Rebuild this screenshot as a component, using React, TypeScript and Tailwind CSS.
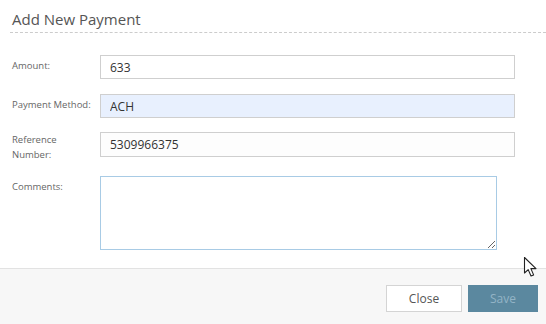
const fieldClass =
  "h-[24px] w-[415px] border border-[#cfcfcf] px-[9px] text-[12px] text-[#333] outline-none";

const Label = ({ children }: { children: React.ReactNode }) => (
  <label className="w-[88px] pt-[3px] text-[9.5px] leading-[15px] text-[#666]">{children}</label>
);

const AddPaymentDialog = () => {
  return (
    <div
      className="relative flex h-[324px] w-[546px] flex-col overflow-hidden bg-white"
      style={{ fontFamily: '"Open Sans", sans-serif' }}
    >
      <div className="ml-[10px] h-[33px] border-b border-dashed border-[#cccccc] pl-[2px] pt-[9px]">
        <h2 className="text-[15px] leading-[20px] text-[#555]">Add New Payment</h2>
      </div>

      <div className="flex flex-col pl-[12px] pt-[22px]">
        <div className="flex items-start">
          <Label>Amount:</Label>
          <input className={`${fieldClass} bg-white`} defaultValue="633" />
        </div>
        <div className="mt-[15px] flex items-start">
          <Label>Payment Method:</Label>
          <input className={`${fieldClass} bg-[#e8f0fe]`} defaultValue="ACH" />
        </div>
        <div className="mt-[14px] flex items-start">
          <label className="w-[88px] text-[9.5px] leading-[15px] text-[#666]">
            Reference
            <br />
            Number:
          </label>
          <input className={`${fieldClass} h-[25px] bg-[#fdfdfd]`} defaultValue="5309966375" />
        </div>
        <div className="mt-[14px] flex items-start">
          <Label>Comments:</Label>
          <textarea className="h-[74px] w-[397px] border border-[#a8cbe5] bg-white px-[8px] text-[12px] outline-none" />
        </div>
      </div>

      <div className="mt-auto flex h-[56px] items-start justify-end gap-[6px] border-t border-[#e2e2e2] bg-[#f7f7f7] pr-[8px] pt-[16px]">
        <button className="h-[27px] w-[76px] border border-[#d4d4d4] bg-white text-[12px] text-[#555]">
          Close
        </button>
        <button className="h-[27px] w-[70px] bg-[#5b889f] text-[12px] text-[#93b4c6]">Save</button>
      </div>

      <svg
        className="absolute left-[523px] top-[256px]"
        width="18"
        height="22"
        viewBox="0 0 18 22"
      >
        <path
          d="M1.5 1.5 L1.5 17 L5.2 13.6 L8 20 L10.6 18.9 L7.9 12.6 L13 12.6 Z"
          fill="#fff"
          stroke="#222"
          strokeWidth="1.1"
          strokeLinejoin="round"
        />
      </svg>
    </div>
  );
};

export default function App() {
  return <AddPaymentDialog />;
}
